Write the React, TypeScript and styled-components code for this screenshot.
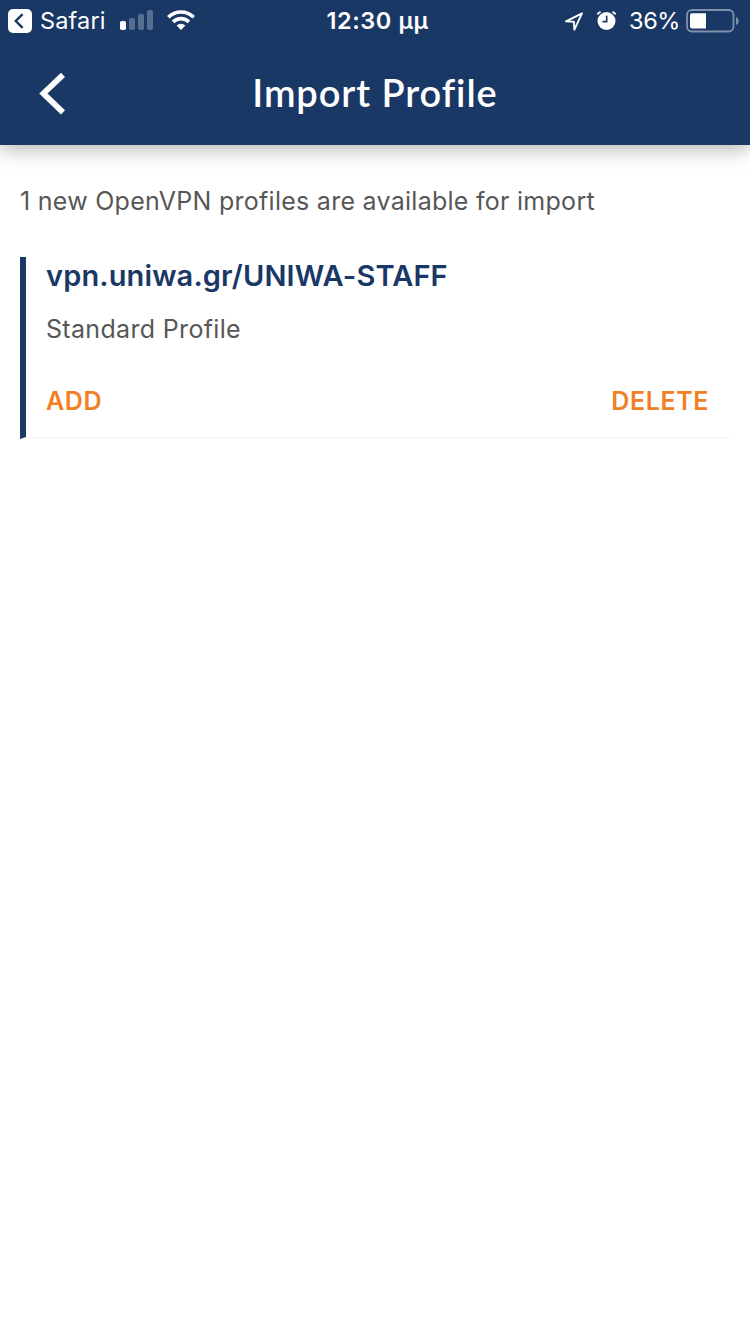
import React from "react";
import styled, { createGlobalStyle } from "styled-components";

const navy = "#1a3866";
const orange = "#f08023";

const GlobalStyle = createGlobalStyle`
  * { box-sizing: border-box; }
  body { margin: 0; background: #fff; font-family: Inter, "Liberation Sans", sans-serif; }
`;

const Screen = styled.div`
  width: 750px;
  min-height: 1334px;
  background: #fff;
`;

const Header = styled.header`
  height: 145px;
  background: ${navy};
  color: #fff;
  box-shadow: 0 3px 20px rgba(0, 0, 0, 0.33);
`;

const StatusBar = styled.div`
  display: grid;
  grid-template-columns: 1fr auto 1fr;
  height: 41px;
  padding: 1px 10px 0 8px;
`;

const StatusGroup = styled.div<{ $end?: boolean }>`
  display: flex;
  align-items: center;
  justify-content: ${(p) => (p.$end ? "flex-end" : "flex-start")};
  svg { flex: none; display: block; }
`;

const StatusText = styled.span<{ $weight?: number; $spacing: number; $indent?: number }>`
  padding-left: ${(p) => p.$indent ?? 0}px;
  font-size: 23.5px;
  line-height: 40px;
  font-weight: ${(p) => p.$weight ?? 400};
  letter-spacing: ${(p) => p.$spacing}px;
  white-space: nowrap;
`;

const IconPair = styled.div<{ $raise: number }>`
  display: flex;
  gap: 13px;
  margin-bottom: ${(p) => p.$raise}px;
`;

const Spacer = styled.span<{ $w: number }>`
  flex: none;
  width: ${(p) => p.$w}px;
`;

const NavBar = styled.div`
  display: grid;
  grid-template-columns: 100px 1fr 100px;
  height: 104px;
`;

const BackButton = styled.button`
  display: flex;
  align-items: flex-start;
  border: 0;
  padding: 30px 0 0 38px;
  background: none;
  color: inherit;
`;

const Title = styled.h1`
  margin: 0;
  font: 600 38px/103px Lato, sans-serif;
  letter-spacing: 0.92px;
  text-align: center;
`;

const Content = styled.main`
  padding: 41px 20px 0;
`;

const Intro = styled.p`
  margin: 0 0 41px;
  color: #575757;
  font-size: 25px;
  line-height: 30px;
  letter-spacing: 0.27px;
  white-space: nowrap;
`;

const Card = styled.section`
  height: 182px;
  padding: 0 21px 0 20px;
  border-left: 6px solid ${navy};
  border-bottom: 2px solid #f9f9f9;
`;

const ProfileName = styled.h2`
  margin: 0;
  color: ${navy};
  font-size: 29px;
  font-weight: 600;
  line-height: 38px;
  letter-spacing: 0.14px;
`;

const ProfileKind = styled.p`
  margin: 19px 0 0;
  color: #575757;
  font-size: 25px;
  line-height: 30px;
  letter-spacing: 0.33px;
`;

const Actions = styled.div`
  display: flex;
  justify-content: space-between;
  margin-top: 42px;
`;

const Action = styled.button`
  border: 0;
  padding: 0;
  background: none;
  color: ${orange};
  font: 600 25px/30px Inter, sans-serif;
  letter-spacing: 0.6px;
`;

const ReturnIcon = () => (
  <svg width="24" height="24" viewBox="0 0 24 24">
    <rect width="24" height="24" rx="5" fill="#fff" />
    <path d="M14.6 5.2 7.8 12l6.8 6.8" fill="none" stroke={navy} strokeWidth="2.4" />
  </svg>
);

const SignalIcon = () => (
  <svg width="34" height="20" viewBox="0 0 34 20" fill="#fff">
    <rect x="0" y="11" width="6" height="9" rx="1.8" />
    <g opacity="0.27">
      <rect x="9" y="8" width="6" height="12" rx="1.8" />
      <rect x="18" y="4" width="6" height="16" rx="1.8" />
      <rect x="27" y="0" width="6" height="20" rx="1.8" />
    </g>
  </svg>
);

const WifiIcon = () => (
  <svg width="28" height="20" viewBox="0 0 28 20">
    <g fill="none" stroke="#fff" strokeWidth="3.6">
      <path d="M1.3 7.2a18 18 0 0 1 25.4 0" />
      <path d="M6 11.9a11.4 11.4 0 0 1 16 0" />
    </g>
    <path d="M14 20l-4.4-4.5a6.3 6.3 0 0 1 8.8 0z" fill="#fff" />
  </svg>
);

const LocationIcon = () => (
  <svg width="19" height="20" viewBox="-0.6 -1 19 20">
    <path d="M17.4 1.4 1.4 9.4l7.9.4.5 7.8z" fill="none" stroke="#fff" strokeWidth="1.9" strokeLinejoin="round" />
  </svg>
);

const AlarmIcon = () => (
  <svg width="20" height="20" viewBox="-0.5 0 20 20">
    <circle cx="10" cy="10" r="9" fill="#fff" />
    <path d="M10.2 4.7v5.9H6" fill="none" stroke={navy} strokeWidth="1.6" />
    <path d="M.9 3.4A7 7 0 0 1 4.1.9M19.1 3.4A7 7 0 0 0 15.9.9" fill="none" stroke={navy} strokeWidth="4" />
    <path d="M.9 3.4A7 7 0 0 1 4.1.9M19.1 3.4A7 7 0 0 0 15.9.9" fill="none" stroke="#fff" strokeWidth="1.9" />
  </svg>
);

const BatteryIcon = () => (
  <svg width="54" height="24" viewBox="0 0 54 24">
    <rect x="1" y="1" width="46.5" height="21.5" rx="5" fill="none" stroke="#fff" strokeOpacity="0.45" strokeWidth="1.8" />
    <path d="M50 8v8c3.6-1.6 3.6-6.4 0-8z" fill="#fff" fillOpacity="0.45" />
    <path d="M6 4.2h14v15.3H6a2 2 0 0 1-2-2V6.2a2 2 0 0 1 2-2z" fill="#fff" />
  </svg>
);

export default function App() {
  return (
    <Screen>
      <GlobalStyle />
      <Header>
        <StatusBar>
          <StatusGroup>
            <ReturnIcon />
            <Spacer $w={8} />
            <StatusText $spacing={0.15}>Safari</StatusText>
            <Spacer $w={14} />
            <IconPair $raise={2}>
              <SignalIcon />
              <WifiIcon />
            </IconPair>
          </StatusGroup>
          <StatusText $weight={600} $spacing={0.6} $indent={7}>12:30 μμ</StatusText>
          <StatusGroup $end>
            <IconPair $raise={1}>
              <LocationIcon />
              <AlarmIcon />
            </IconPair>
            <Spacer $w={13} />
            <StatusText $spacing={-0.4}>36%</StatusText>
            <Spacer $w={6} />
            <BatteryIcon />
          </StatusGroup>
        </StatusBar>
        <NavBar>
          <BackButton aria-label="Back">
            <svg width="30" height="44" viewBox="0 0 30 44">
              <path d="M25 3.8 5.4 22.5 25 41.3" fill="none" stroke="#fff" strokeWidth="5.8" />
            </svg>
          </BackButton>
          <Title>Import Profile</Title>
        </NavBar>
      </Header>
      <Content>
        <Intro>1 new OpenVPN profiles are available for import</Intro>
        <Card>
          <ProfileName>vpn.uniwa.gr/UNIWA-STAFF</ProfileName>
          <ProfileKind>Standard Profile</ProfileKind>
          <Actions>
            <Action>ADD</Action>
            <Action>DELETE</Action>
          </Actions>
        </Card>
      </Content>
    </Screen>
  );
}
